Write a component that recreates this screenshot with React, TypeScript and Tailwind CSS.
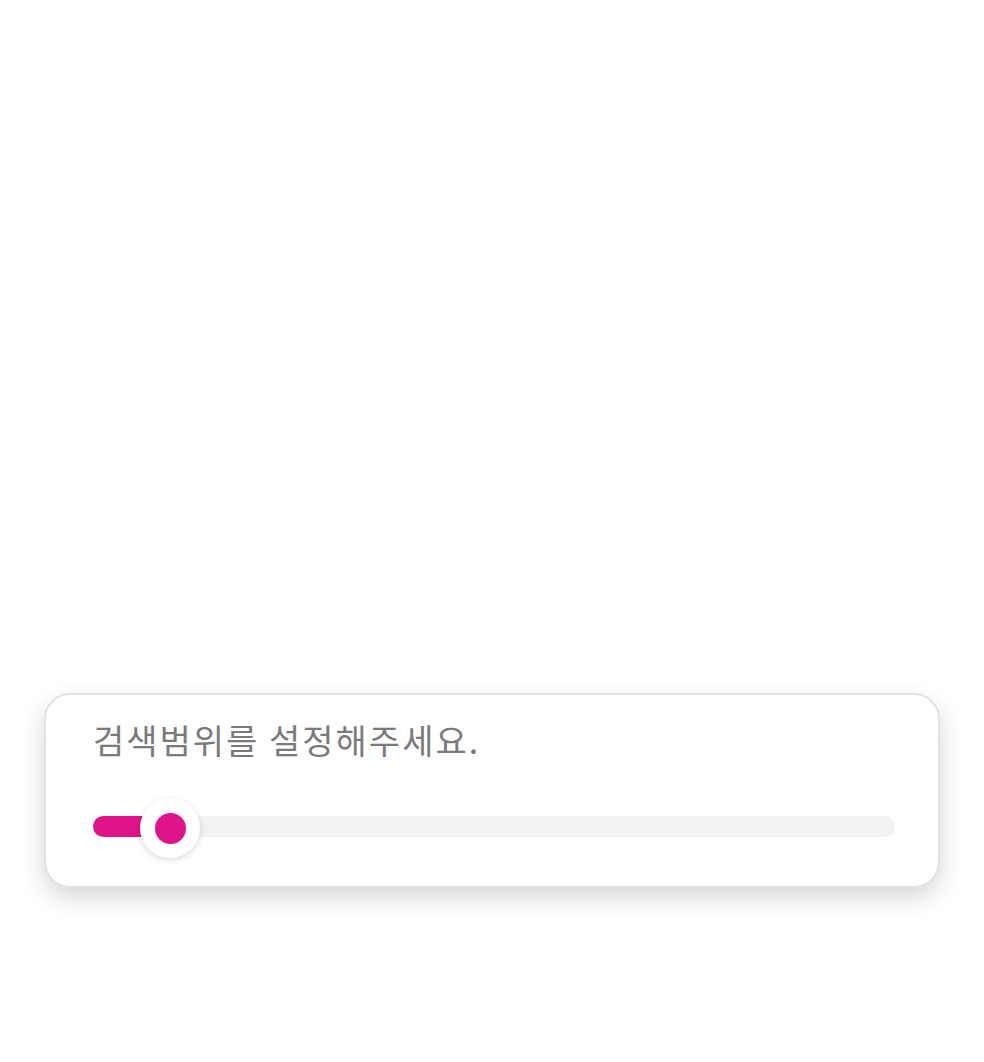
export default function App() {
  const value = 10;
  return (
    <div className="min-h-[1062px] w-full bg-white pt-[693px] px-[44px]" style={{ fontFamily: '"Noto Sans CJK KR", "Noto Sans", sans-serif' }}>
      <div className="h-[195px] rounded-[26px] border-2 border-[#e2e2e2] bg-white shadow-[0_10px_24px_rgba(0,0,0,0.16)] pl-[47px] pr-[43px] pt-[21px]">
        <div className="text-[34px] leading-[48px] tracking-[2px] text-[#7a7a7a]">검색범위를 설정해주세요.</div>
        <div className="relative mt-[32px] h-[60px] flex items-center">
          <div className="h-[21px] w-full rounded-full bg-[#f2f2f2]">
            <div className="h-full rounded-full bg-[#e0148a]" style={{ width: `${value}%` }} />
          </div>
          <div className="absolute top-[2px] left-[47px] flex h-[60px] w-[60px] items-center justify-center rounded-full bg-white shadow-[0_2px_6px_rgba(0,0,0,0.15)]">
            <div className="h-[31px] w-[31px] rounded-full bg-[#e0148a]" />
          </div>
        </div>
      </div>
    </div>
  );
}
